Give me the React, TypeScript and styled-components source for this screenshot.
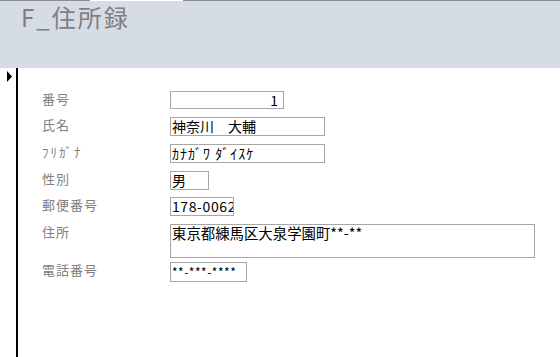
import styled, { createGlobalStyle } from 'styled-components'

const GlobalStyle = createGlobalStyle`
  html, body {
    margin: 0;
    padding: 0;
    background: #ffffff;
    font-family: "Noto Sans CJK JP", "Noto Sans", sans-serif;
  }
`

interface IField {
  label: string;
  value: string;
  width: number;
  height: number;
  gap: number;
  align?: 'left' | 'right';
  size?: number;
  spacing?: number;
}

const fields: IField[] = [
  { label: '番号', value: '1', width: 114, height: 18, gap: 0, align: 'right' },
  { label: '氏名', value: '神奈川　大輔', width: 155, height: 19, gap: 8 },
  { label: 'ﾌﾘｶﾞﾅ', value: 'ｶﾅｶﾞﾜ ﾀﾞｲｽｹ', width: 155, height: 19, gap: 8, spacing: 1 },
  { label: '性別', value: '男', width: 39, height: 19, gap: 8 },
  { label: '郵便番号', value: '178-0062', width: 64, height: 19, gap: 7, spacing: 0.6 },
  { label: '住所', value: '東京都練馬区大泉学園町**-**', width: 365, height: 34, gap: 8, size: 14.4 },
  { label: '電話番号', value: '**-***-****', width: 77, height: 20, gap: 4, size: 12, spacing: 0.5 },
]

const App = () => {
  return (
    <Page>
      <GlobalStyle />
      <TopEdge>
        <EdgePart $width={90} $color='#8c9096' />
        <EdgePart $width={93} $color='#ffffff' />
        <EdgePart $color='#8c9096' />
      </TopEdge>
      <Header>
        <Title>F_住所録</Title>
      </Header>

      <Body>
        <Selector>
          <svg width='6' height='11' viewBox='0 0 6 11' style={{ display: 'block' }}>
            <polygon points='0,0 5,5.5 0,11' fill='#000' />
          </svg>
        </Selector>

        <Form>
          {fields.map((f, i) => (
            <Row key={i} $gap={f.gap}>
              <Label $kana={f.label === 'ﾌﾘｶﾞﾅ'}>{f.label}</Label>
              <TextBox
                $width={f.width}
                $height={f.height}
                $align={f.align || 'left'}
                $size={f.size || 14}
                $spacing={f.spacing || 0}
              >
                {f.value}
              </TextBox>
            </Row>
          ))}
        </Form>
      </Body>
    </Page>
  )
}

export default App;

const Page = styled.div`
  height: 100vh;
  display: flex;
  flex-direction: column;
  overflow: hidden;
`

const TopEdge = styled.div`
  display: flex;
  height: 1px;
`

const EdgePart = styled.div<{ $width?: number; $color: string }>`
  ${p => p.$width ? `width: ${p.$width}px;` : 'flex: 1;'}
  background: ${p => p.$color};
`

const Header = styled.header`
  height: 67px;
  background: #d6dce5;
  padding-left: 21px;
  box-sizing: border-box;
`

const Title = styled.h1`
  margin: 0;
  font-size: 24px;
  line-height: 32px;
  font-weight: 400;
  letter-spacing: 2px;
  color: #7f7f7f;
`

const Body = styled.main`
  flex: 1;
  display: flex;
`

const Selector = styled.div`
  width: 18px;
  border-right: 2px solid #000;
  padding: 3px 0 0 7px;
  box-sizing: border-box;
  flex-shrink: 0;
`

const Form = styled.section`
  padding: 23px 0 0 24px;
  display: flex;
  flex-direction: column;
`

const Row = styled.div<{ $gap: number }>`
  display: flex;
  align-items: flex-start;
  margin-top: ${p => p.$gap}px;
`

const Label = styled.div<{ $kana: boolean }>`
  width: 128px;
  font-size: 13px;
  line-height: 16px;
  letter-spacing: ${p => p.$kana ? 2 : 1}px;
  color: #808080;
`

const TextBox = styled.div<{ $width: number; $height: number; $align: string; $size: number; $spacing: number }>`
  width: ${p => p.$width}px;
  height: ${p => p.$height}px;
  box-sizing: border-box;
  border: 1px solid #a6a6a6;
  padding: 0 ${p => p.$align === 'right' ? '5px' : '1px'} 0 1px;
  text-align: ${p => p.$align};
  font-size: ${p => p.$size}px;
  line-height: ${p => p.$size < 13 ? 17 : 16}px;
  letter-spacing: ${p => p.$spacing}px;
  color: #000;
  white-space: nowrap;
  overflow: hidden;
`
